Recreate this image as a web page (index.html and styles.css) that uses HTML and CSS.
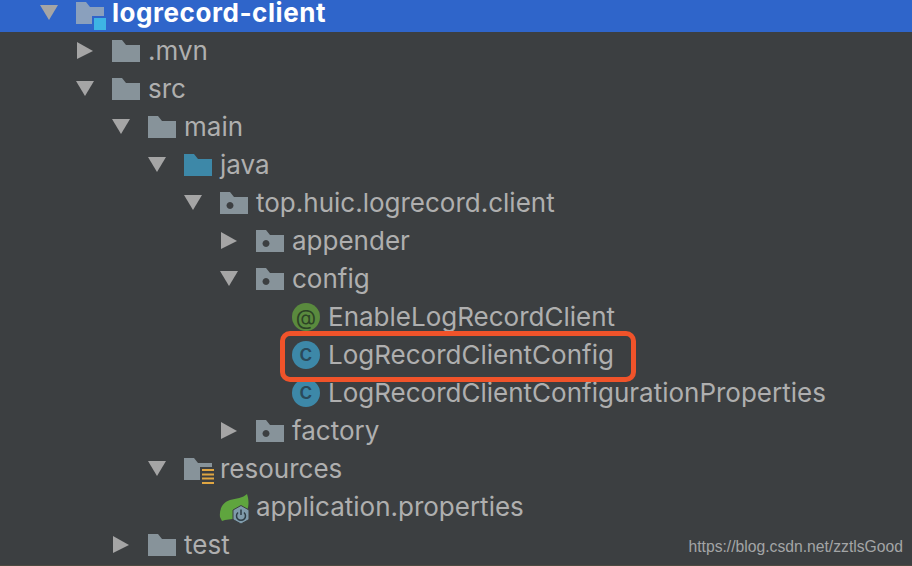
FILE: index.html
```html
<!DOCTYPE html>
<html lang="en">
<head>
  <meta charset="UTF-8" />
  <title>Project tree</title>
  <link rel="stylesheet" href="styles.css">
</head>
<body>

  <svg class="defs" width="0" height="0">
    <symbol id="arrow-down" viewBox="0 0 18 18"><path d="M0 1H18L9 16Z"/></symbol>
    <symbol id="arrow-right" viewBox="0 0 18 18"><path d="M1 0L17 9L1 17Z"/></symbol>
    <symbol id="folder" viewBox="0 0 28 22"><path d="M0 0H10L14 5H28V22H0Z"/></symbol>
    <symbol id="package" viewBox="0 0 28 22"><path fill-rule="evenodd" d="M0 0H10L14 5H28V22H0ZM10 10a3.5 3.5 0 1 0 .01 0Z"/></symbol>
  </svg>

  <div class="tree">
    <div class="row lvl-0 selected">
      <svg class="arrow"><use href="#arrow-down"/></svg>
      <svg class="icon" viewBox="0 -6 30 34">
        <path class="root-folder" d="M0 0H10L14 5H28V14H16V22H0Z"/>
        <rect class="root-square" x="18" y="16" width="12" height="12"/>
      </svg>
      <span class="name">logrecord-client</span>
    </div>
    <div class="row lvl-1">
      <svg class="arrow"><use href="#arrow-right"/></svg>
      <svg class="icon folder"><use href="#folder"/></svg>
      <span class="name">.mvn</span>
    </div>
    <div class="row lvl-1">
      <svg class="arrow"><use href="#arrow-down"/></svg>
      <svg class="icon folder"><use href="#folder"/></svg>
      <span class="name">src</span>
    </div>
    <div class="row lvl-2">
      <svg class="arrow"><use href="#arrow-down"/></svg>
      <svg class="icon folder"><use href="#folder"/></svg>
      <span class="name">main</span>
    </div>
    <div class="row lvl-3">
      <svg class="arrow"><use href="#arrow-down"/></svg>
      <svg class="icon folder source"><use href="#folder"/></svg>
      <span class="name">java</span>
    </div>
    <div class="row lvl-4">
      <svg class="arrow"><use href="#arrow-down"/></svg>
      <svg class="icon folder"><use href="#package"/></svg>
      <span class="name">top.huic.logrecord.client</span>
    </div>
    <div class="row lvl-5">
      <svg class="arrow"><use href="#arrow-right"/></svg>
      <svg class="icon folder"><use href="#package"/></svg>
      <span class="name">appender</span>
    </div>
    <div class="row lvl-5">
      <svg class="arrow"><use href="#arrow-down"/></svg>
      <svg class="icon folder"><use href="#package"/></svg>
      <span class="name">config</span>
    </div>
    <div class="row lvl-6">
      <span class="arrow"></span>
      <span class="badge annotation">@</span>
      <span class="name">EnableLogRecordClient</span>
    </div>
    <div class="row lvl-6">
      <span class="arrow"></span>
      <span class="badge klass">c</span>
      <span class="name">LogRecordClientConfig</span>
    </div>
    <div class="row lvl-6">
      <span class="arrow"></span>
      <span class="badge klass">c</span>
      <span class="name">LogRecordClientConfigurationProperties</span>
    </div>
    <div class="row lvl-5">
      <svg class="arrow"><use href="#arrow-right"/></svg>
      <svg class="icon folder"><use href="#package"/></svg>
      <span class="name">factory</span>
    </div>
    <div class="row lvl-3">
      <svg class="arrow"><use href="#arrow-down"/></svg>
      <svg class="icon" viewBox="0 -6 30 34">
        <path class="plain-folder" d="M0 0H10L14 5H28V9H16V22H0Z"/>
        <path class="lines" d="M18 12H30M18 16.500H30M18 20.500H30M18 25H30"/>
      </svg>
      <span class="name">resources</span>
    </div>
    <div class="row lvl-4">
      <span class="arrow"></span>
      <svg class="icon" viewBox="0 -6 30 34">
        <path class="leaf" d="M27 -2C29 4 29 10 27 14L20 22L5 24L2 25L0 21C-1 13 3 6 10 4C16 2.500 23 2 27 -2Z"/>
        <path class="nut" d="M21 9.500L29 14V23.500L21 28L13 23.500V14Z"/>
        <path class="power" d="M18 16.500A4.500 4.500 0 1 0 24 16.500M21 13.500V19"/>
      </svg>
      <span class="name">application.properties</span>
    </div>
    <div class="row lvl-2">
      <svg class="arrow"><use href="#arrow-right"/></svg>
      <svg class="icon folder"><use href="#folder"/></svg>
      <span class="name">test</span>
    </div>
  </div>

  <!-- red box somebody drew on the screenshot -->
  <div class="highlight"></div>
  <div class="watermark">https://blog.csdn.net/zztlsGood</div>

</body>
</html>
```

FILE: styles.css
```css
html, body {
  height: 100%;
}
body {
  margin: 0;
  background: #3c3f41;
  font-family: Inter, "Liberation Sans", sans-serif;
  overflow: hidden;
  position: relative;
}
body::after {
  content: '';
  position: absolute;
  left: 0;
  right: 0;
  bottom: 0;
  height: 1px;
  background: #4c4a40;
}
.defs {
  position: absolute;
}
.row {
  display: flex;
  align-items: center;
  height: 38px;
  color: #afafaf;
  font-size: 26px;
  line-height: 1;
  white-space: nowrap;
}
.selected {
  height: 32px;
  padding-bottom: 6px;
  box-sizing: border-box;
  background: #2f65ca;
  color: #fff;
  font-weight: 700;
  letter-spacing: 0.55px;
}
.lvl-0 { padding-left: 40px; }
.lvl-1 { padding-left: 76px; }
.lvl-2 { padding-left: 112px; }
.lvl-3 { padding-left: 148px; }
.lvl-4 { padding-left: 184px; }
.lvl-5 { padding-left: 220px; }
.lvl-6 { padding-left: 256px; }
.arrow {
  width: 18px;
  height: 18px;
  margin-right: 18px;
  fill: #a5a5a5;
  flex: none;
}
.icon {
  width: 30px;
  height: 34px;
  margin-right: 6px;
  flex: none;
  overflow: visible;
}
.icon.folder {
  width: 28px;
  height: 22px;
  margin-right: 8px;
  fill: #87939a;
}
.icon.source {
  fill: #3d88a8;
}
.root-folder { fill: #8aa0bd; }
.root-square { fill: #3eb4e4; }
.plain-folder { fill: #87939a; }
.lines {
  fill: none;
  stroke: #e0a642;
  stroke-width: 2;
}
.leaf { fill: #5fa53e; }
.nut { fill: #7f9bab; stroke: #3c3f41; stroke-width: 1; }
.power {
  fill: none;
  stroke: #2e3d45;
  stroke-width: 1.500;
}
.badge {
  width: 28px;
  height: 28px;
  margin-right: 8px;
  border-radius: 50%;
  flex: none;
  display: flex;
  align-items: center;
  justify-content: center;
  color: #2a4a5a;
}
.annotation {
  background: #5a8a3e;
  color: #2c4326;
  font-size: 21px;
}
.klass {
  background: #3d88a8;
  font-size: 23px;
  font-weight: 500;
  padding-bottom: 3px;
  box-sizing: border-box;
}
.highlight {
  position: absolute;
  left: 280px;
  top: 331px;
  width: 346px;
  height: 41px;
  border: 5px solid #f0532a;
  border-radius: 10px;
}
.watermark {
  position: absolute;
  right: 9px;
  bottom: 10px;
  font-family: "Liberation Sans", sans-serif;
  font-size: 15.700px;
  color: #a3a5a6;
}
```
